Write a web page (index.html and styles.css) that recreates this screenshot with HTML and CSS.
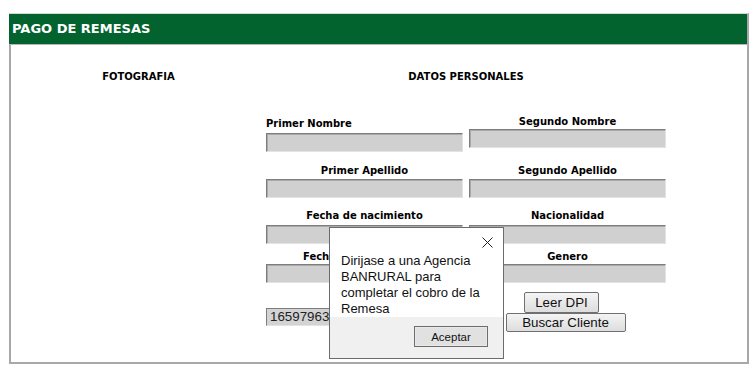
FILE: index.html
```html
<!DOCTYPE html>
<html>
<head>
    <title>Pago de Remesas</title>
    <link rel="stylesheet" href="styles.css">
</head>
<body>
    <div class="panel">
        <div class="panel-head">PAGO DE REMESAS</div>
        <div class="panel-body">
            <div class="col-foto">
                <h3>FOTOGRAFIA</h3>
            </div>
            <div class="col-datos">
                <h3>DATOS PERSONALES</h3>

                <div class="row row-1">
                    <div class="field first">
                        <label>Primer Nombre</label>
                        <input type="text" class="txt">
                    </div>
                    <div class="field tight">
                        <label>Segundo Nombre</label>
                        <input type="text" class="txt">
                    </div>
                </div>

                <div class="row row-2">
                    <div class="field">
                        <label>Primer Apellido</label>
                        <input type="text" class="txt">
                    </div>
                    <div class="field">
                        <label>Segundo Apellido</label>
                        <input type="text" class="txt">
                    </div>
                </div>

                <div class="row row-3">
                    <div class="field loose">
                        <label>Fecha de nacimiento</label>
                        <input type="text" class="txt">
                    </div>
                    <div class="field loose">
                        <label>Nacionalidad</label>
                        <input type="text" class="txt">
                    </div>
                </div>

                <div class="row row-4">
                    <div class="field tight">
                        <label>Fecha de vencimiento</label>
                        <input type="text" class="txt">
                    </div>
                    <div class="field tight">
                        <label>Genero</label>
                        <input type="text" class="txt">
                    </div>
                </div>

                <div class="row row-5">
                    <div class="dpi-cell">
                        <input type="text" class="dpi" value="1659796320101">
                    </div>
                    <div class="btn-cell">
                        <button class="btn btn-leer">Leer DPI</button>
                        <button class="btn btn-buscar">Buscar Cliente</button>
                    </div>
                </div>
            </div>
        </div>
    </div>

    <!-- mensaje del sistema -->
    <div class="dialog">
        <div class="dialog-body">
            <span class="dialog-close">
                <svg width="11" height="11" viewBox="0 0 11 11">
                    <path d="M0.5 0.5 L10.5 10.5 M10.5 0.5 L0.5 10.5" stroke="#222" stroke-width="1" fill="none"/>
                </svg>
            </span>
            <p>Dirijase a una Agencia BANRURAL para completar el cobro de la Remesa</p>
        </div>
        <div class="dialog-foot">
            <button class="btn-aceptar">Aceptar</button>
        </div>
    </div>
</body>
</html>
```

FILE: styles.css
```css
body {
    margin: 0;
    background-color: #ffffff;
    font-family: "DejaVu Sans", Verdana, sans-serif;
    color: #000;
}
.panel {
    margin: 13px 0 0 9px;
    width: 740px;
}
.panel-head {
    height: 32px;
    box-sizing: border-box;
    border-top: 1px solid #cfdccf;
    border-right: 2px solid #a8a8a8;
    border-bottom: 1px solid #b5b5b5;
    background-color: #03632f;
    color: #ffffff;
    font-size: 13px;
    font-weight: bold;
    line-height: 30px;
    padding-left: 3px;
}
.panel-body {
    display: flex;
    height: 319px;
    box-sizing: border-box;
    border-left: 2px solid #a8a8a8;
    border-right: 2px solid #a8a8a8;
    border-bottom: 2px solid #a8a8a8;
}
h3 {
    margin: 0;
    font-size: 10px;
    line-height: 12px;
    text-align: center;
}
.col-foto {
    width: 255px;
    padding-top: 26px;
}
.col-datos {
    width: 400px;
    padding-top: 26px;
}
.row {
    display: grid;
    grid-template-columns: 197px 197px;
    column-gap: 6px;
    align-items: start;
}
.row-1 { margin-top: 33px; }
.row-2 { margin-top: 13px; }
.row-3 { margin-top: 12px; }
.row-4 { margin-top: 7px; }
.row-5 { margin-top: 9px; }

.field {
    display: flex;
    flex-direction: column;
    gap: 2px;
}
.field label {
    font-size: 10px;
    font-weight: bold;
    line-height: 12px;
    height: 12px;
    text-align: center;
    white-space: nowrap;
}
.field.first {
    padding-top: 2px;
    gap: 3px;
}
.field.first label {
    text-align: left;
}
.field.tight { gap: 1px; }
.field.loose { gap: 3px; }

.txt {
    margin: 0;
    width: 197px;
    height: 19px;
    box-sizing: border-box;
    background-color: #d0d0d0;
    border: 1px solid;
    border-color: #7d7d7d #e3e3e3 #e3e3e3 #7d7d7d;
    box-shadow: inset 1px 1px 0 #a9a9a9;
}
.dpi-cell {
    padding-top: 14px;
}
.dpi {
    margin: 0;
    width: 130px;
    height: 18px;
    box-sizing: border-box;
    padding: 0 0 0 3px;
    background-color: #d3d3d3;
    border: 1px solid;
    border-color: #7d7d7d #e3e3e3 #e3e3e3 #7d7d7d;
    font-family: "Liberation Sans", Arial, sans-serif;
    font-size: 13.33px;
    color: #222;
}
.btn-cell {
    display: flex;
    flex-direction: column;
    align-items: center;
}
.btn {
    margin: 0;
    padding: 0;
    font-family: "Liberation Sans", Arial, sans-serif;
    font-size: 13.33px;
    color: #111;
    background: linear-gradient(#f4f4f4, #dddddd);
    border: 1px solid #707070;
    border-radius: 2px;
}
.btn-leer {
    width: 75px;
    height: 21px;
    margin-right: 12px;
}
.btn-buscar {
    width: 120px;
    height: 19px;
    margin-right: 4px;
}

.dialog {
    position: absolute;
    left: 329px;
    top: 227px;
    width: 175px;
    height: 132px;
    box-sizing: border-box;
    border: 1px solid #6b6b6b;
    background-color: #ffffff;
    display: flex;
    flex-direction: column;
    font-family: "Liberation Sans", Arial, sans-serif;
}
.dialog-body {
    position: relative;
    height: 89px;
    padding: 25px 8px 0 11px;
    box-sizing: border-box;
}
.dialog-close {
    position: absolute;
    right: 10px;
    top: 9px;
    line-height: 0;
}
.dialog-body p {
    margin: 0;
    font-size: 13px;
    line-height: 16px;
    color: #111;
}
.dialog-foot {
    flex: 1;
    background-color: #f0f0f0;
    display: flex;
    justify-content: flex-end;
    align-items: flex-start;
    padding: 9px 15px 0 0;
}
.btn-aceptar {
    margin: 0;
    width: 74px;
    height: 21px;
    padding: 0;
    font-family: "Liberation Sans", Arial, sans-serif;
    font-size: 11.5px;
    color: #111;
    background-color: #e1e1e1;
    border: 1px solid #6d6d6d;
    box-shadow: inset 0 0 0 1px #e8e8e8;
}
```
